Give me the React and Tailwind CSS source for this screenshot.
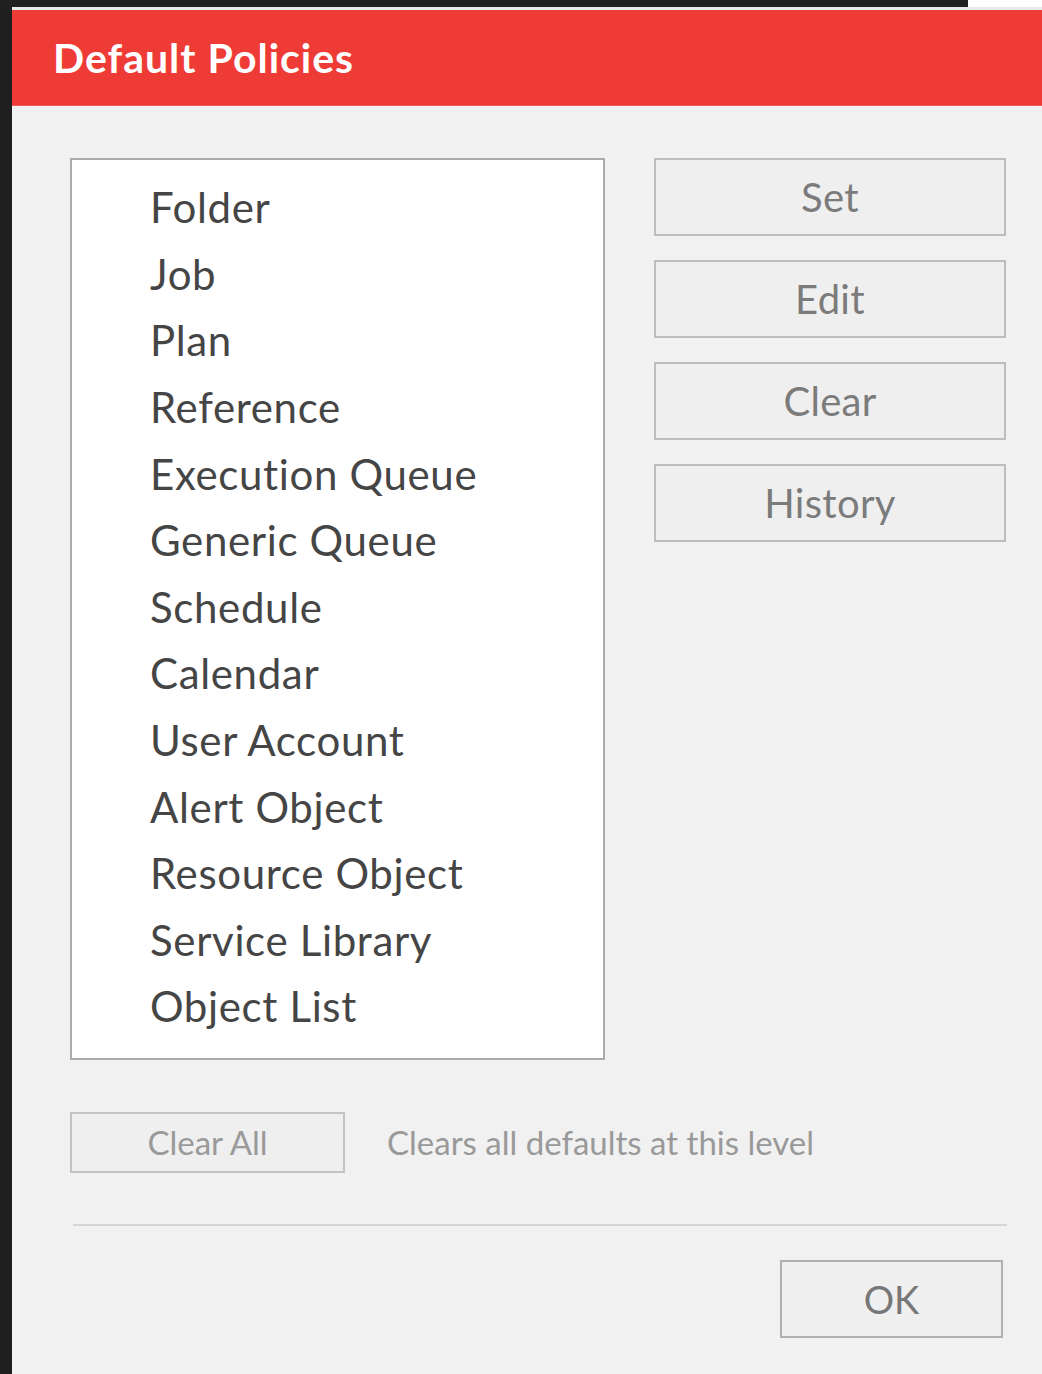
import React from "react";

const items = [
  "Folder",
  "Job",
  "Plan",
  "Reference",
  "Execution Queue",
  "Generic Queue",
  "Schedule",
  "Calendar",
  "User Account",
  "Alert Object",
  "Resource Object",
  "Service Library",
  "Object List",
];

const actions = ["Set", "Edit", "Clear", "History"];

const font = { fontFamily: "Lato, 'Open Sans', sans-serif" };

export default function App() {
  return (
    <div className="w-[1042px] h-[1374px] flex flex-col bg-[#f1f1f1] overflow-hidden" style={font}>
      {/* strip of the window behind the dialog */}
      <div className="h-[7px] flex shrink-0">
        <div className="w-[968px] bg-[#1f201f]" />
        <div className="flex-1 bg-white" />
      </div>
      <div className="flex flex-1">
        <div className="w-[12px] bg-[#1e1f1e] shrink-0" />
        <div className="flex-1 flex flex-col">
          <div className="h-[3px] bg-[#e8eaea]" />
          <div className="h-[96px] bg-[#ef3b36] border-b border-[#f25a55] flex items-center pl-[41px]">
            <h1 className="text-white text-[41px] font-bold tracking-[1px]">Default Policies</h1>
          </div>

          <div className="flex pt-[52px] pl-[58px] pr-[36px]">
            <ul className="w-[535px] h-[902px] bg-white border-2 border-[#aaaaaa] pt-[14px] pl-[78px]">
              {items.map((t) => (
                <li
                  key={t}
                  className="h-[66.6px] flex items-center text-[42px] tracking-[0.65px] text-[#454545] leading-none"
                >
                  {t}
                </li>
              ))}
            </ul>
            <div className="flex flex-col gap-[24px] ml-[49px] flex-1">
              {actions.map((a) => (
                <button
                  key={a}
                  className="h-[78px] w-[352px] bg-[#efefef] border-2 border-[#bdbdbd] text-[40px] tracking-[0.3px] text-[#7b7b7b]"
                >
                  {a}
                </button>
              ))}
            </div>
          </div>

          <div className="flex items-center pl-[58px] mt-[52px]">
            <button className="w-[275px] h-[61px] bg-[#efefef] border-2 border-[#c3c3c3] text-[33px] text-[#9a9a9a]">
              Clear All
            </button>
            <span className="ml-[42px] text-[33px] text-[#999999]">Clears all defaults at this level</span>
          </div>

          <div className="mt-[51px] ml-[61px] mr-[35px] h-[2px] bg-[#d6d6d6]" />

          <div className="flex justify-end pr-[39px] mt-[34px]">
            <button className="w-[223px] h-[78px] bg-[#efefef] border-2 border-[#b0b0b0] text-[38px] text-[#777777]">
              OK
            </button>
          </div>
        </div>
      </div>
    </div>
  );
}
